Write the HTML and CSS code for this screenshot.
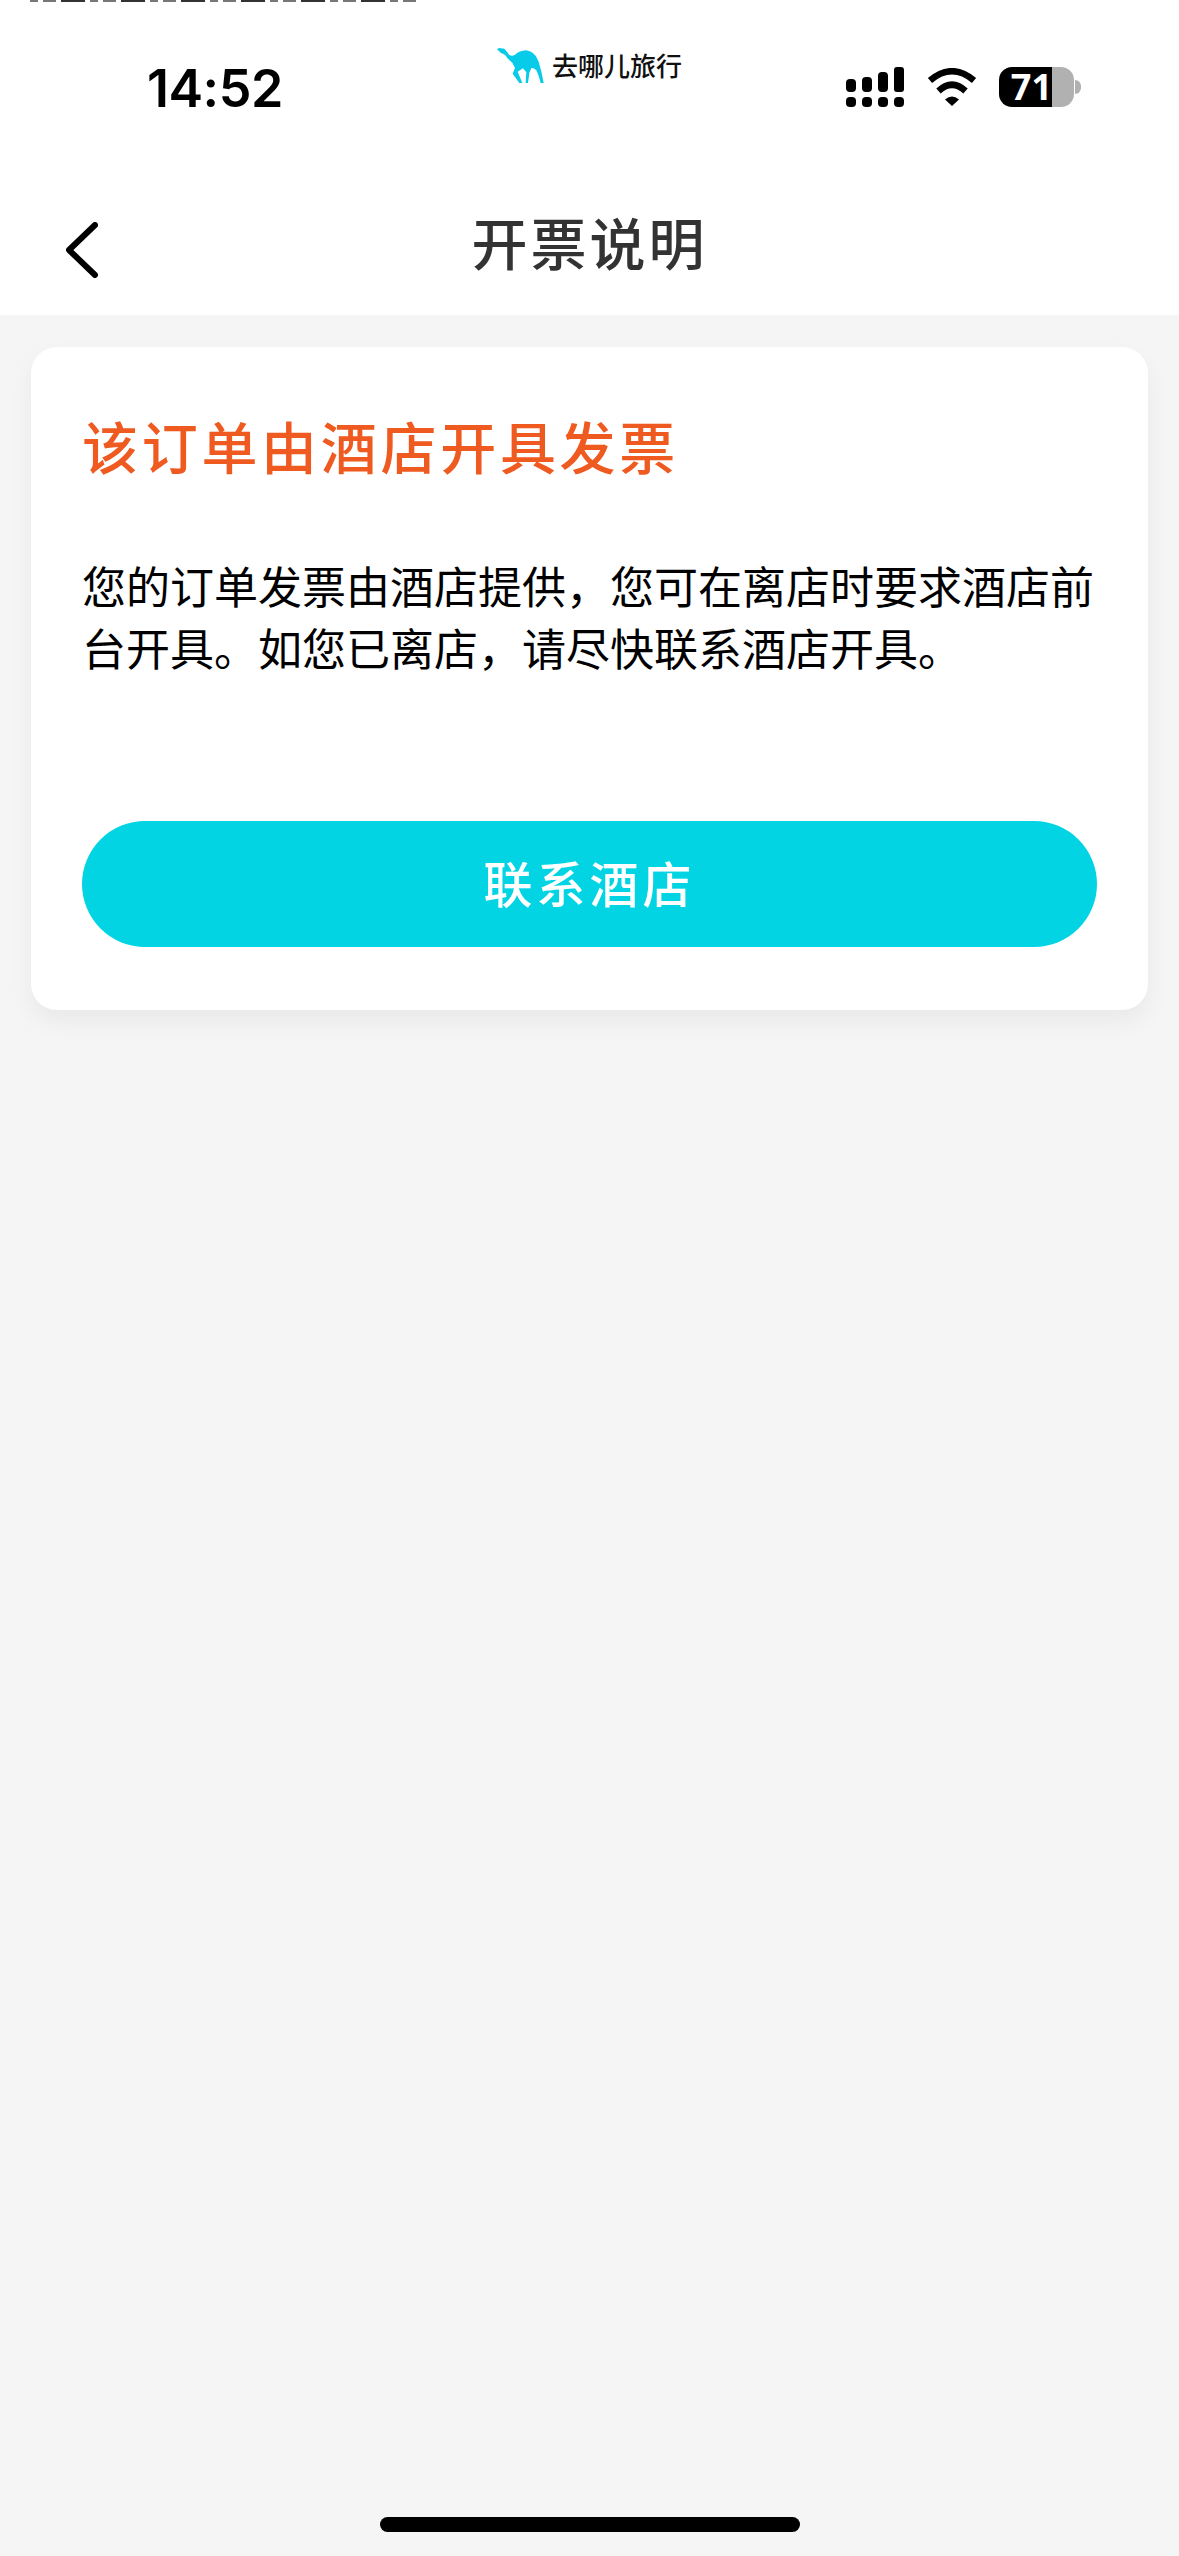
FILE: index.html
```html
<!DOCTYPE html>
<html lang="zh-CN">
<head>
<meta charset="utf-8">
<title>开票说明</title>
<link rel="stylesheet" href="styles.css">
</head>
<body>
<div class="sliver" aria-hidden="true"><i></i><i></i><i></i><i></i><i></i><i></i><i></i><i></i><i></i><i></i><i></i><i></i><i></i><i></i><i></i><i></i><i></i><i></i><i></i><i></i></div>
<header class="head">
  <div class="status">
    <span class="time">14:52</span>
    <div class="brand">
      <svg class="camel" viewBox="25 25 141 105" aria-hidden="true"><path d="M25 29 L31 25 L47 27 Q55 36 62 46 Q70 51 78 46 Q92 33 112 32 Q130 34 142 50 L150 66 Q159 95 165 130 L156 130 Q152 110 143 92 Q135 84 128 85 L122 100 L118 130 L111 130 L113 98 L103 86 L87 96 L101 130 L92 130 L72 102 L79 85 L71 69 Q58 60 49 45 L37 40 Z"/></svg>
      <span class="brand-name">去哪儿旅行</span>
    </div>
    <div class="indicators">
      <svg class="signal" viewBox="0 0 58 40" aria-hidden="true">
        <rect x="0" y="12" width="10" height="13" rx="4"/><rect x="16" y="10" width="10" height="15" rx="4"/><rect x="32" y="5" width="10" height="20" rx="4"/><rect x="48" y="0" width="10" height="25" rx="3"/>
        <rect x="0" y="30" width="10" height="10" rx="4"/><rect x="16" y="30" width="10" height="10" rx="4"/><rect x="32" y="30" width="10" height="10" rx="4"/><rect x="48" y="30" width="10" height="10" rx="4"/>
      </svg>
      <svg class="wifi" viewBox="0 0 50 38" aria-hidden="true">
        <path class="arc" d="M3 12.5 Q25 -6 47 12.5"/><path class="arc" d="M11.5 23 Q25 10.5 38.5 23"/><path d="M18 31.5 Q25 25.5 32 31.5 L25 38 Z"/>
      </svg>
      <div class="battery"><span class="batt-level">71</span><span class="batt-rest"></span><span class="batt-nub"></span></div>
    </div>
  </div>
  <div class="nav">
    <svg class="back" viewBox="0 0 32 56" aria-hidden="true"><path d="M29 3 L3 28 L29 53"/></svg>
    <h1 class="nav-title">开票说明</h1>
  </div>
</header>
<main class="content">
  <section class="card">
    <h2 class="card-title">该订单由酒店开具发票</h2>
    <p class="card-text">您的订单发票由酒店提供，您可在离店时要求酒店前台开具。如您已离店，请尽快联系酒店开具。</p>
    <button class="action" type="button">联系酒店</button>
  </section>
</main>
<div class="home-bar"></div>
</body>
</html>
```
FILE: styles.css
```css
* { box-sizing: border-box; }
html, body { margin: 0; padding: 0; }
body {
  width: 1179px;
  height: 2556px;
  overflow: hidden;
  display: flex;
  flex-direction: column;
  background: #f5f5f5;
  font-family: "Noto Sans CJK SC", "Noto Sans", sans-serif;
  color: #000;
}
.sliver {
  height: 2px;
  background: #fff;
  display: flex;
  gap: 5px;
  padding-left: 30px;
  width: 100%;
}
.sliver i { display: block; width: 13px; height: 2px; background: #777; }
.sliver i:nth-child(3n) { width: 24px; background: #333; }
.sliver i:nth-child(3n+1) { width: 8px; }
.head { background: #fff; height: 313px; display: flex; flex-direction: column; }
.status {
  height: 132px;
  display: grid;
  grid-template-columns: 1fr auto 1fr;
  align-items: start;
}
.time {
  font-family: Inter, Roboto, sans-serif;
  font-weight: 600;
  font-size: 52px;
  line-height: 60px;
  padding-left: 147px;
  margin-top: 57px;
  letter-spacing: -0.5px;
}
.brand { display: flex; align-items: center; gap: 8px; margin-top: 45px; }
.camel { width: 47px; height: 35px; fill: #07cbe8; margin-top: 1px; }
.brand-name { font-size: 26px; line-height: 34px; font-weight: 500; color: #111; }
.indicators { display: flex; align-items: flex-start; padding-left: 164px; margin-top: 65px; }
.signal { width: 58px; height: 40px; fill: #000; }
.wifi { width: 50px; height: 38px; margin: 1px 0 0 23px; fill: #000; }
.wifi .arc { fill: none; stroke: #000; stroke-width: 6.5; }
.battery { display: flex; align-items: center; height: 40px; margin-left: 22px; }
.batt-level {
  width: 53px;
  height: 40px;
  background: #000;
  color: #fff;
  border-radius: 13px 0 0 13px;
  font-family: "Open Sans", sans-serif;
  font-weight: 700;
  font-size: 36px;
  line-height: 40px;
  text-align: right;
}
.batt-rest { width: 22px; height: 40px; background: #b1b1b1; border-radius: 0 13px 13px 0; }
.batt-nub { width: 6px; height: 14px; margin-left: 1px; background: #b1b1b1; border-radius: 0 7px 7px 0; }
.nav { flex: 1; display: grid; grid-template-columns: 1fr auto 1fr; align-items: start; }
.back {
  width: 32px;
  height: 56px;
  margin: 88px 0 0 66px;
  fill: none;
  stroke: #000;
  stroke-width: 6;
  stroke-linecap: round;
  stroke-linejoin: round;
}
.nav-title {
  grid-column: 2;
  margin: 69px 0 0;
  font-size: 56px;
  line-height: 76px;
  font-weight: 500;
  letter-spacing: 3px;
  color: #333;
}
.content { flex: 1; padding: 32px 31px 0; }
.card {
  background: #fff;
  border-radius: 26px;
  padding: 60px 51px 63px;
  height: 663px;
  box-shadow: 0 12px 24px rgba(0, 0, 0, 0.05);
  display: flex;
  flex-direction: column;
}
.card-title {
  margin: 0;
  font-size: 56px;
  line-height: 76px;
  font-weight: 500;
  letter-spacing: 3.7px;
  color: #ef5a20;
}
.card-text {
  margin: 71px 0 0;
  font-size: 44px;
  line-height: 62px;
  color: #000;
  font-weight: 400;
}
.action {
  margin-top: auto;
  height: 126px;
  width: 100%;
  border: 0;
  border-radius: 63px;
  padding-bottom: 6px;
  background: #02d4e4;
  color: #fff;
  font-family: inherit;
  font-size: 49px;
  font-weight: 500;
  letter-spacing: 4px;
}
.home-bar {
  width: 420px;
  height: 15px;
  margin: 0 auto 24px;
  border-radius: 8px;
  background: #000;
}
```
